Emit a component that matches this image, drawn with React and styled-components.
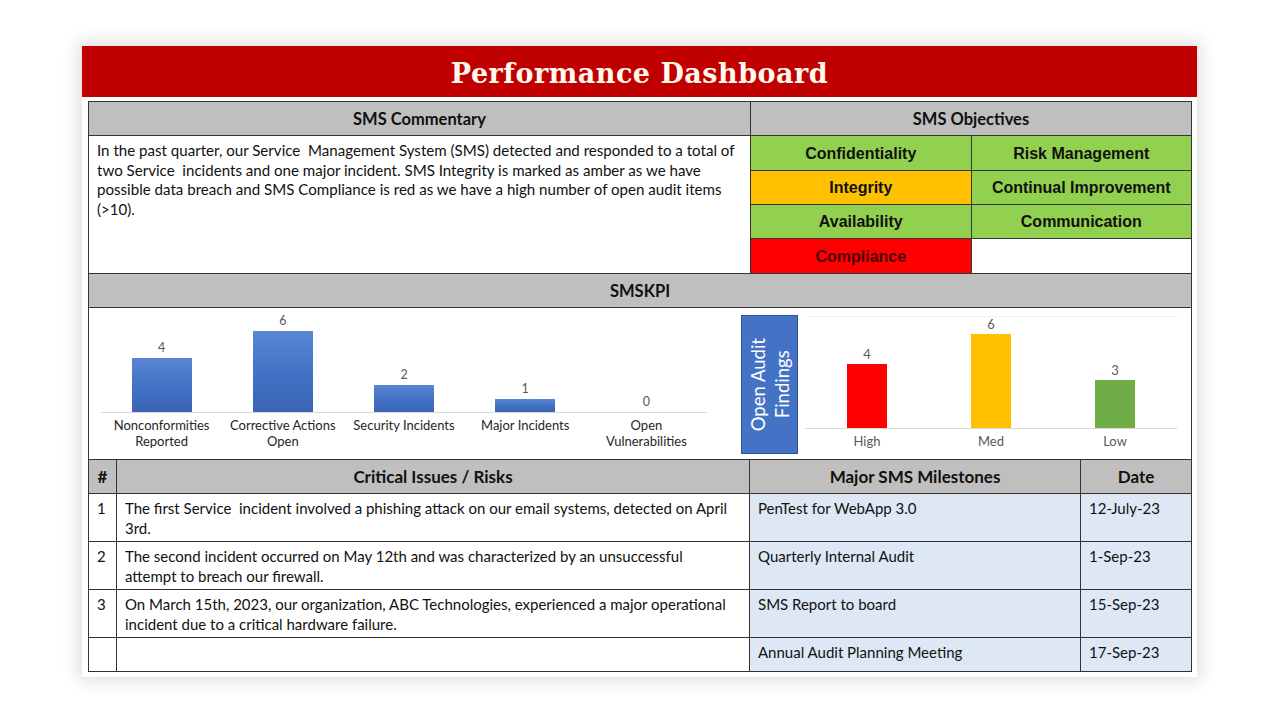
import React from 'react';
import styled, { createGlobalStyle } from 'styled-components';

const Global = createGlobalStyle`
  * { box-sizing: border-box; }
  html, body { margin: 0; padding: 0; background: #fff; }
  body { font-family: Lato, "Open Sans", sans-serif; color: #111; }
`;

const Page = styled.div`
  width: 1280px;
  height: 720px;
  padding: 46px 0 0 82px;
`;

const Slide = styled.div`
  width: 1115px;
  height: 631px;
  background: #fff;
  box-shadow: 0 0 16px 4px rgba(0, 0, 0, 0.13);
  display: flex;
  flex-direction: column;
`;

const TitleBar = styled.div`
  height: 51px;
  background: #c00000;
  display: flex;
  align-items: center;
  justify-content: center;
  padding-top: 3px;
  font-family: "DejaVu Serif", serif;
  font-weight: bold;
  font-size: 27px;
  letter-spacing: 0.5px;
  color: #fff8ec;
`;

const Board = styled.div`
  margin: 4px 5px 0 6px;
  border-top: 1px solid #333;
  border-left: 1px solid #333;
  display: flex;
  flex-direction: column;
`;

const Cell = styled.div`
  border-right: 1px solid #333;
  border-bottom: 1px solid #333;
`;

const HeadCell = styled(Cell)`
  background: #bfbfbf;
  display: flex;
  align-items: center;
  justify-content: center;
  font-weight: bold;
  font-size: ${(p) => p.$size || 17}px;
  height: 34px;
  color: #111;
`;

const TopGrid = styled.div`
  display: grid;
  grid-template-columns: 662px 1fr;
  grid-template-rows: 34px 138px;
`;

const Commentary = styled(Cell)`
  padding: 5px 8px;
  font-size: 15.1px;
  line-height: 19.5px;
  white-space: pre-wrap;
`;

const ObjGrid = styled.div`
  display: grid;
  grid-template-columns: 1fr 1fr;
  grid-template-rows: 35px 34px 34px 35px;
`;

const ObjCell = styled(Cell)`
  background: ${(p) => p.$bg};
  color: ${(p) => p.$fg || '#111'};
  display: flex;
  align-items: center;
  justify-content: center;
  font-family: "Liberation Sans", Arial, sans-serif;
  font-weight: bold;
  font-size: 16px;
  padding-top: 1px;
`;

const ChartsRow = styled(Cell)`
  height: 152px;
  display: flex;
`;

const LeftChart = styled.div`
  width: 651px;
  padding-left: 12px;
  display: flex;
  flex-direction: column;
`;

const Plot = styled.div`
  width: ${(p) => p.$w}px;
  display: flex;
  flex-direction: column;
`;

const BarsArea = styled.div`
  height: ${(p) => p.$h}px;
  margin-top: ${(p) => p.$top || 0}px;
  display: flex;
  align-items: stretch;
  border-bottom: 1px solid #d9d9d9;
  border-top: ${(p) => (p.$grid ? '1px solid #f2f2f2' : 'none')};
`;

const BarCol = styled.div`
  flex: 1;
  display: flex;
  flex-direction: column;
  align-items: center;
  justify-content: flex-end;
`;

const ValueLabel = styled.div`
  font-size: ${(p) => p.$size || 12.5}px;
  line-height: 14px;
  color: #595959;
  margin-bottom: ${(p) => p.$gap || 3}px;
`;

const Bar = styled.div`
  width: ${(p) => p.$w}px;
  background: ${(p) => p.$bg};
`;

const CatRow = styled.div`
  display: flex;
  padding-top: ${(p) => p.$pad || 3}px;
`;

const CatLabel = styled.div`
  flex: 1;
  text-align: center;
  font-size: ${(p) => p.$size || 13}px;
  line-height: 16px;
  color: ${(p) => p.$color || '#262626'};
`;

const AuditBox = styled.div`
  margin: 7px 0 0 1px;
  width: 57px;
  height: 139px;
  background: #4472c4;
  border: 1px solid #2f528f;
  display: flex;
  align-items: center;
  justify-content: center;
`;

const AuditText = styled.span`
  writing-mode: vertical-rl;
  transform: rotate(180deg);
  text-align: center;
  color: #fff;
  font-size: 18.5px;
  line-height: 24px;
`;

const RightChart = styled.div`
  margin-left: 7px;
  display: flex;
  flex-direction: column;
`;

const BottomGrid = styled.div`
  display: grid;
  grid-template-columns: 28px 633px 331px 1fr;
  grid-template-rows: 34px 48px 48px 48px 34px;
`;

const BodyCell = styled(Cell)`
  background: ${(p) => (p.$blue ? '#dde8f4' : '#fff')};
  padding: 4px 14px 0 8px;
  font-size: 15px;
  line-height: 20px;
  white-space: pre-wrap;
`;

const kpi = [
  { v: 4, l: ['Nonconformities', 'Reported'] },
  { v: 6, l: ['Corrective Actions', 'Open'] },
  { v: 2, l: ['Security Incidents'] },
  { v: 1, l: ['Major Incidents'] },
  { v: 0, l: ['Open', 'Vulnerabilities'] },
];

const audit = [
  { v: 4, l: 'High', c: '#ff0000' },
  { v: 6, l: 'Med', c: '#ffc000' },
  { v: 3, l: 'Low', c: '#70ad47' },
];

const objectives = [
  { t: 'Confidentiality', bg: '#92d050' },
  { t: 'Risk Management', bg: '#92d050' },
  { t: 'Integrity', bg: '#ffc000' },
  { t: 'Continual Improvement', bg: '#92d050' },
  { t: 'Availability', bg: '#92d050' },
  { t: 'Communication', bg: '#92d050' },
  { t: 'Compliance', bg: '#ff0000', fg: '#4a0000' },
  { t: '', bg: '#fff' },
];

const issues = [
  {
    n: '1',
    t: 'The first Service  incident involved a phishing attack on our email systems, detected on April 3rd.',
    m: 'PenTest for WebApp 3.0',
    d: '12-July-23',
  },
  {
    n: '2',
    t: 'The second incident occurred on May 12th and was characterized by an unsuccessful attempt to breach our firewall.',
    m: 'Quarterly Internal Audit',
    d: '1-Sep-23',
  },
  {
    n: '3',
    t: 'On March 15th, 2023, our organization, ABC Technologies, experienced a major operational incident due to a critical hardware failure.',
    m: 'SMS Report to board',
    d: '15-Sep-23',
  },
  { n: '', t: '', m: 'Annual Audit Planning Meeting', d: '17-Sep-23' },
];

const blueBar = 'linear-gradient(180deg, #5a86d3 0%, #4472c4 50%, #3a64b6 100%)';

export default function App() {
  return (
    <Page>
      <Global />
      <Slide>
        <TitleBar>Performance Dashboard</TitleBar>
        <Board>
          <TopGrid>
            <HeadCell $size={16.5}>SMS Commentary</HeadCell>
            <HeadCell $size={16.5}>SMS Objectives</HeadCell>
            <Commentary>
              In the past quarter, our Service  Management System (SMS) detected and responded to a total of two Service  incidents and one major incident. SMS Integrity is marked as amber as we have possible data breach and SMS Compliance is red as we have a high number of open audit items (&gt;10).
            </Commentary>
            <ObjGrid>
              {objectives.map((o, i) => (
                <ObjCell key={i} $bg={o.bg} $fg={o.fg}>
                  {o.t}
                </ObjCell>
              ))}
            </ObjGrid>
          </TopGrid>
          <HeadCell $size={16.5}>SMSKPI</HeadCell>
          <ChartsRow>
            <LeftChart>
              <Plot $w={606}>
                <BarsArea $h={105}>
                  {kpi.map((k, i) => (
                    <BarCol key={i}>
                      <ValueLabel>{k.v}</ValueLabel>
                      <Bar $w={60} $bg={blueBar} style={{ height: k.v * 13.5 }} />
                    </BarCol>
                  ))}
                </BarsArea>
                <CatRow $pad={4}>
                  {kpi.map((k, i) => (
                    <CatLabel key={i}>
                      {k.l.map((line, j) => (
                        <div key={j}>{line}</div>
                      ))}
                    </CatLabel>
                  ))}
                </CatRow>
              </Plot>
            </LeftChart>
            <AuditBox>
              <AuditText>
                Open Audit
                <br />
                Findings
              </AuditText>
            </AuditBox>
            <RightChart>
              <Plot $w={372}>
                <BarsArea $h={113} $top={8} $grid>
                  {audit.map((a, i) => (
                    <BarCol key={i}>
                      <ValueLabel $size={13}>{a.v}</ValueLabel>
                      <Bar $w={40} $bg={a.c} style={{ height: a.v * 16 }} />
                    </BarCol>
                  ))}
                </BarsArea>
                <CatRow $pad={4}>
                  {audit.map((a, i) => (
                    <CatLabel key={i} $size={13} $color="#595959">
                      {a.l}
                    </CatLabel>
                  ))}
                </CatRow>
              </Plot>
            </RightChart>
          </ChartsRow>
          <BottomGrid>
            <HeadCell>#</HeadCell>
            <HeadCell>Critical Issues / Risks</HeadCell>
            <HeadCell>Major SMS Milestones</HeadCell>
            <HeadCell>Date</HeadCell>
            {issues.map((r, i) => (
              <React.Fragment key={i}>
                <BodyCell>{r.n}</BodyCell>
                <BodyCell>{r.t}</BodyCell>
                <BodyCell $blue>{r.m}</BodyCell>
                <BodyCell $blue>{r.d}</BodyCell>
              </React.Fragment>
            ))}
          </BottomGrid>
        </Board>
      </Slide>
    </Page>
  );
}
